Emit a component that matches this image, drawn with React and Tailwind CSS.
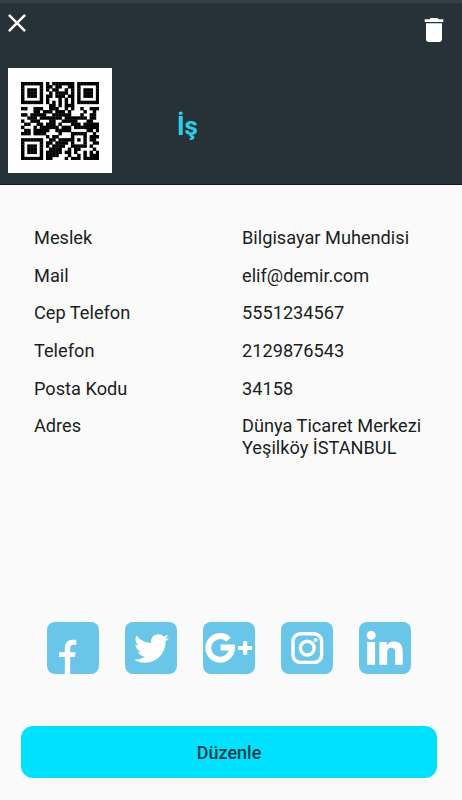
import { MdDelete } from 'react-icons/md'
import { FaTwitter } from 'react-icons/fa'

const qrRows = [
  '1111111010111111101111111',
  '1000001011011001101000001',
  '1011101010110010101011101',
  '1011101001011110101011101',
  '1011101011011101101011101',
  '1000001010001010101000001',
  '1111111010101010101111111',
  '0000000001101011100000000',
  '1100111001110010100100111',
  '0000110111011101000010010',
  '1101111100111111000100110',
  '0011101111111011111110110',
  '1001110001100111110001100',
  '0110011011101000111011111',
  '1000101111110111011111111',
  '0110111110011111000001101',
  '1110111100001000111110010',
  '0000000010110000100010111',
  '1111111001101111101010110',
  '1000001011011110100010011',
  '1011101010111100111110100',
  '1011101001111001011000010',
  '1011101011111011010010101',
  '1000001011110001001010111',
  '1111111011000010111011111',
]

const details = [
  { label: 'Meslek', value: 'Bilgisayar Muhendisi' },
  { label: 'Mail', value: 'elif@demir.com' },
  { label: 'Cep Telefon', value: '5551234567' },
  { label: 'Telefon', value: '2129876543' },
  { label: 'Posta Kodu', value: '34158' },
  { label: 'Adres', value: 'Dünya Ticaret Merkezi Yeşilköy İSTANBUL' },
]

function QrCode() {
  return (
    <svg viewBox="0 0 25 25" className="w-[78px] h-[78px]">
      {qrRows.map((row, y) =>
        [...row].map((cell, x) =>
          cell === '1' ? <rect key={`${x}-${y}`} x={x} y={y} width="1.1" height="1.1" fill="#000" /> : null
        )
      )}
    </svg>
  )
}

function FacebookIcon() {
  return (
    <svg viewBox="0 0 52 52" className="size-full" fill="#fff">
      <path d="M17.8 52V35H12v-4.8h5.8v-3.7c0-5.8 3-8.7 8-8.7h3.5v5H27c-2.8 0-3.8 1.1-3.8 3.5v3.9h5.4l-.7 4.8h-4.7v17z" />
    </svg>
  )
}

function GooglePlusIcon() {
  return (
    <svg viewBox="0 0 52 52" className="size-full" fill="none" stroke="#fff">
      <path d="M25.5 17.6A11.8 11.8 0 1 0 28.9 25.4H17.6" strokeWidth="6" />
      <path d="M42.2 19.3v13.4M35.3 26h13.6" strokeWidth="4.2" />
    </svg>
  )
}

function InstagramIcon() {
  return (
    <svg viewBox="0 0 52 52" className="size-full" fill="none" stroke="#fff" strokeWidth="3.4">
      <rect x="12" y="11.8" width="28.6" height="28.6" rx="7.5" />
      <circle cx="26.3" cy="26.1" r="6.9" />
      <circle cx="34.6" cy="18" r="2" fill="#fff" stroke="none" />
    </svg>
  )
}

function LinkedinIcon() {
  return (
    <svg viewBox="0 0 52 52" className="size-full" fill="#fff">
      <circle cx="12.2" cy="13.2" r="4.5" />
      <path d="M8.2 20h7.9v22.7H8.2zM20.4 20h7.3v3.2c1.3-2.2 3.9-3.8 7.3-3.8 6.8 0 8.7 4.3 8.7 10.6v12.7h-7.6V31.2c0-3-.3-5.4-3.7-5.4-3.5 0-4.2 2.4-4.2 5.4v11.5h-7.8z" />
    </svg>
  )
}

const socials = [
  { name: 'facebook', icon: <FacebookIcon /> },
  { name: 'twitter', icon: <FaTwitter className="size-[35px] text-white" /> },
  { name: 'google-plus', icon: <GooglePlusIcon /> },
  { name: 'instagram', icon: <InstagramIcon /> },
  { name: 'linkedin', icon: <LinkedinIcon /> },
]

export default function App() {
  return (
    <div className="w-[462px] h-[800px] flex flex-col bg-[#fafafa] font-['Roboto',sans-serif] overflow-hidden">
      {/* Header with QR code and card title */}
      <header className="h-[185px] shrink-0 bg-[#263238] border-t-3 border-t-[#30414a] border-b border-b-[#10171b]">
        <div className="flex justify-between items-start pl-2 pr-3 pt-[11px] h-[65px]">
          <button aria-label="Kapat">
            <svg viewBox="0 0 18 18" className="size-[18px]" stroke="#fff" strokeWidth="2.5">
              <path d="M.9.9l16.2 16.2M17.1.9L.9 17.1" />
            </svg>
          </button>
          <button aria-label="Sil">
            <MdDelete className="size-8 text-white" />
          </button>
        </div>
        <div className="flex items-center pl-2">
          <div className="w-[104px] h-[105px] bg-white flex items-center justify-center">
            <QrCode />
          </div>
          <h1 className="ml-[65px] mt-2.5 text-[26px] leading-8 font-bold text-[#26d0e6]">İş</h1>
        </div>
      </header>

      {/* Contact details */}
      <dl className="flex flex-col gap-[16.4px] pt-[42px] pl-[34px] h-[437px] shrink-0 text-[18.2px] leading-[21.3px] text-[#1a1e20]">
        {details.map(item => (
          <div key={item.label} className="flex">
            <dt className="w-[208px]">{item.label}</dt>
            <dd className="w-[190px]">{item.value}</dd>
          </div>
        ))}
      </dl>

      <div className="flex justify-center gap-[26px] pr-1">
        {socials.map(social => (
          <button
            key={social.name}
            aria-label={social.name}
            className="size-[52px] rounded-lg bg-[#69c6e8] flex items-center justify-center"
          >
            {social.icon}
          </button>
        ))}
      </div>

      <button className="mt-[52px] ml-[21px] w-[416px] h-[52px] shrink-0 rounded-xl bg-[#00e1ff] text-[18px] font-medium text-[#123c48]">
        Düzenle
      </button>
    </div>
  )
}
